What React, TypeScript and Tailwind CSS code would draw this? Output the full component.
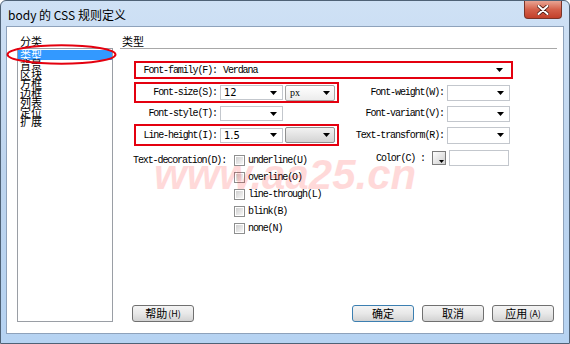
const mono = "font-['Liberation_Mono',monospace] text-[10px] tracking-[-1.1px] text-black whitespace-nowrap";
const cjk = "font-['Noto_Sans_CJK_SC','Noto_Sans',sans-serif]";

const Arrow = () => (
  <svg width="7" height="4" viewBox="0 0 7 4" className="shrink-0">
    <path d="M0 0h7L3.5 4z" fill="#000" />
  </svg>
);

type SelectProps = {
  w: string;
  h?: string;
  value?: string;
  valueCls?: string;
  border?: string;
};

const Select = ({ w, h = "h-[15px]", value = "", valueCls = "", border = "border border-[#c3c7cd]" }: SelectProps) => (
  <div className={`${w} ${h} ${border} bg-white flex items-center justify-between pl-[3px] pr-[5px]`}>
    <span className={valueCls}>{value}</span>
    <Arrow />
  </div>
);

const UnitSelect = ({ value, disabled }: { value?: string; disabled?: boolean }) => (
  <div
    className={`w-[50px] h-[16px] rounded-[2px] border flex items-center justify-between pl-[4px] pr-[4px] ${
      disabled
        ? "border-[#8f8f8f] bg-gradient-to-b from-[#f2f2f2] to-[#d4d4d4]"
        : "border-[#a5a5a5] bg-gradient-to-b from-[#ffffff] to-[#ececec]"
    }`}
  >
    <span className="font-['Liberation_Serif',serif] text-[10px] leading-none text-black">{value}</span>
    <Arrow />
  </div>
);

const Label = ({ text, w }: { text: string; w: string }) => (
  <span className={`${w} text-right pr-[3px] ${mono}`}>{text}</span>
);

const Checkbox = ({ label }: { label: string }) => (
  <div className="h-[17px] flex items-center gap-[3px]">
    <span className="w-[11px] h-[11px] border border-[#8e8f8f] bg-white p-[1px]">
      <span className="block w-full h-full bg-gradient-to-br from-[#cfcfcf] to-[#f7f7f7]" />
    </span>
    <span className={mono}>{label}</span>
  </div>
);

const Button = ({ children, primary }: { children: React.ReactNode; primary?: boolean }) => (
  <button
    className={`w-[62px] h-[17px] rounded-[3px] border ${
      primary ? "border-[#3c7fb1]" : "border-[#707070]"
    } bg-gradient-to-b from-[#f4f4f4] via-[#e8e8e8] to-[#d2d2d2] flex items-center justify-center ${cjk} text-[11px] leading-none text-black`}
  >
    {children}
  </button>
);

const categories = ["背景", "区块", "方框", "边框", "列表", "定位", "扩展"];

export default function App() {
  return (
    <div className="relative w-[570px] h-[344px] overflow-hidden rounded-t-[6px] border border-[#4f6276] bg-gradient-to-b from-[#cfe1f5] via-[#bdd4ee] to-[#b6d3f2] flex flex-col">
      {/* title bar */}
      <div className="h-[25px] flex items-start justify-between">
        <span className={`pl-[7px] pt-[6px] text-[12px] leading-[16px] text-black ${cjk}`}>body 的 CSS 规则定义</span>
        <div className="mr-[7px] w-[38px] h-[18px] rounded-b-[4px] border border-t-0 border-[#7a3428] bg-gradient-to-b from-[#e8a493] via-[#d4604a] to-[#c2402a] flex items-center justify-center">
          <svg width="12" height="10" viewBox="0 0 12 10">
            <path d="M1.5 1l9 8M10.5 1l-9 8" stroke="#4a1810" strokeWidth="3.6" strokeLinecap="round" />
            <path d="M1.5 1l9 8M10.5 1l-9 8" stroke="#fff" strokeWidth="2" strokeLinecap="round" />
          </svg>
        </div>
      </div>

      {/* client area */}
      <div className="flex-1 px-[5px] pb-[9px] flex">
        <div className="flex-1 border border-[#8ea2bb] bg-white flex pl-[10px] pr-[6px] pt-[8px] pb-[11px] gap-[7px]">
          {/* left: categories */}
          <div className="w-[96px] flex flex-col">
            <div className={`h-[13px] pl-[3px] text-[11px] leading-[13px] text-black ${cjk}`}>分类</div>
            <div className="flex-1 border border-[#9a9ea5] pt-[1px] bg-white">
              <div className={`h-[10px] bg-[#3399ff] pl-[2px] text-[11px] leading-[10px] text-white ${cjk}`}>类型</div>
              {categories.map((c) => (
                <div key={c} className={`h-[9.5px] pl-[2px] text-[11px] leading-[9.5px] text-black ${cjk}`}>
                  {c}
                </div>
              ))}
            </div>
          </div>

          {/* right: 类型 */}
          <div className="flex-1 flex flex-col">
            <div className={`h-[14px] pl-[2px] border-b border-[#a8a8a8] text-[11px] leading-[12px] text-black ${cjk}`}>类型</div>

            <div className="mt-[12px] ml-[14px] w-[379px] h-[18px] border-2 border-[#e4000f] flex items-center">
              <Label text="Font-family(F):" w="w-[84px]" />
              <div className="w-[288px] h-[14px] bg-white flex items-center justify-between pl-[3px] pr-[5px]">
                <span className={mono}>Verdana</span>
                <Arrow />
              </div>
            </div>

            <div className="mt-[3px] h-[21px] flex items-center">
              <div className="ml-[14px] w-[205px] h-[21px] border-2 border-[#e4000f] flex items-center">
                <Label text="Font-size(S):" w="w-[84px]" />
                <Select w="w-[63px]" value="12" valueCls="font-['DejaVu_Sans',sans-serif] text-[10px]" />
                <div className="ml-[2px]">
                  <UnitSelect value="px" />
                </div>
              </div>
              <Label text="Font-weight(W):" w="w-[108px]" />
              <Select w="w-[63px]" h="h-[16px]" />
            </div>

            <div className="h-[21px] flex items-center">
              <div className="ml-[14px] w-[205px] h-[21px] border-2 border-transparent flex items-center">
                <Label text="Font-style(T):" w="w-[84px]" />
                <Select w="w-[63px]" />
              </div>
              <Label text="Font-variant(V):" w="w-[108px]" />
              <Select w="w-[63px]" h="h-[16px]" />
            </div>

            <div className="h-[22px] flex items-center">
              <div className="ml-[14px] w-[205px] h-[22px] border-2 border-[#e4000f] flex items-center">
                <Label text="Line-height(I):" w="w-[84px]" />
                <Select w="w-[63px]" value="1.5" valueCls="font-['DejaVu_Sans',sans-serif] text-[10px]" />
                <div className="ml-[2px]">
                  <UnitSelect disabled />
                </div>
              </div>
              <Label text="Text-transform(R):" w="w-[108px]" />
              <Select w="w-[63px]" h="h-[17px]" />
            </div>

            <div className="mt-[6px] flex items-start">
              <div className="ml-[13px] w-[243px] flex items-start">
                <span className={`w-[101px] h-[17px] flex items-center ${mono}`}>Text-decoration(D):</span>
                <div className="flex flex-col">
                  <Checkbox label="underline(U)" />
                  <Checkbox label="overline(O)" />
                  <Checkbox label="line-through(L)" />
                  <Checkbox label="blink(B)" />
                  <Checkbox label="none(N)" />
                </div>
              </div>
              <div className="-mt-[2px] flex items-center">
                <span className={`w-[56px] ${mono}`}>Color(C) :</span>
                <div className="relative w-[14px] h-[14px] border border-[#7c7c7c] bg-gradient-to-br from-[#ffffff] to-[#cfcfcf]">
                  <svg width="5" height="3" viewBox="0 0 5 3" className="absolute right-[1px] bottom-[1px]">
                    <path d="M0 0h5L2.5 3z" fill="#000" />
                  </svg>
                </div>
                <div className="ml-[3px] w-[60px] h-[16px] border border-[#c3c7cd] bg-white" />
              </div>
            </div>

            <div className="flex-1" />

            <div className="flex items-center pr-[3px]">
              <div className="ml-[12px]">
                <Button>
                  帮助 <span className="text-[9px] ml-[1px]">(H)</span>
                </Button>
              </div>
              <div className="flex-1" />
              <div className="flex gap-[8px]">
                <Button primary>确定</Button>
                <Button>取消</Button>
                <Button>
                  应用 <span className="text-[9px] ml-[2px]">(A)</span>
                </Button>
              </div>
            </div>
          </div>
        </div>
      </div>

      {/* annotation: red ellipse around selected category */}
      <svg className="absolute left-[5px] top-[43px] pointer-events-none" width="111" height="21" viewBox="0 0 111 21">
        <ellipse cx="55.5" cy="10.5" rx="54" ry="9.3" fill="none" stroke="#e4000f" strokeWidth="2" />
      </svg>

      {/* watermark */}
      <span className="absolute left-[153px] top-[153px] pointer-events-none font-['Liberation_Sans',sans-serif] italic font-bold text-[42px] leading-none text-[#ff0000]/15 tracking-[0px]">
        www.aa25.cn
      </span>
    </div>
  );
}
